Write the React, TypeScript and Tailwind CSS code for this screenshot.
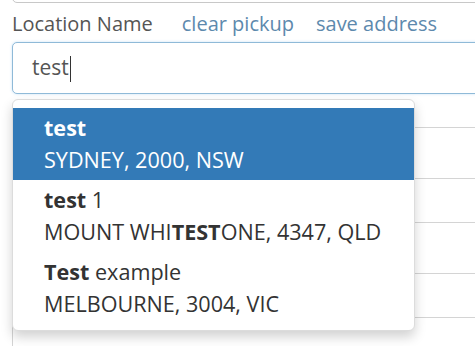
import React from "react";

export default function App() {
  const font = { fontFamily: '"Open Sans", "Noto Sans", sans-serif' };
  return (
    <div className="relative w-[475px] h-[346px] overflow-hidden bg-white" style={font}>
      <div className="pl-[12px] w-[560px] flex flex-col">
        {/* previous input (only its bottom edge visible) */}
        <div className="h-[52px] -mt-[49px] border border-[#c8c8c8] rounded-[5px] bg-white" />
        {/* label row */}
        <div className="h-[39px] flex items-center text-[20px] leading-none pt-[2px]">
          <span className="text-[#555555]">Location Name</span>
          <span className="text-[#5d89ad] ml-[29px]">clear pickup</span>
          <span className="text-[#5d89ad] ml-[22px]">save address</span>
        </div>
        {/* focused input */}
        <div className="h-[52px] border border-[#8fbad8] rounded-[5px] bg-white flex items-center pl-[19px] text-[21px] text-[#555555] shadow-[0_0_3px_rgba(102,175,233,0.35)]">
          <span>test</span>
          <span className="inline-block w-[1px] h-[26px] bg-[#333333] ml-[1px] mt-[2px]" />
        </div>
        {/* inputs behind dropdown */}
        <div className="h-[52px] mt-[33px] border border-[#d4d4d4] rounded-[5px]" />
        <div className="h-[52px] mt-[43px] border border-[#d4d4d4] rounded-[5px]" />
        <div className="h-[52px] mt-[43px] border border-[#d4d4d4] rounded-[5px]" />
      </div>

      {/* dropdown */}
      <div className="absolute left-[12px] top-[99px] w-[403px] h-[232px] bg-white border border-[#dcdcdc] rounded-[6px] shadow-[0_6px_12px_rgba(0,0,0,0.18)] pt-[8px] text-[21.6px] text-[#333333] leading-[32px]">
        <div className="bg-[#337ab7] text-white pl-[31px] py-[4px]">
          <div className="font-bold">test</div>
          <div>SYDNEY, 2000, NSW</div>
        </div>
        <div className="pl-[31px] py-[4px]">
          <div>
            <span className="font-bold">test</span> 1
          </div>
          <div>
            MOUNT WHI<span className="font-bold">TEST</span>ONE, 4347, QLD
          </div>
        </div>
        <div className="pl-[31px] py-[4px]">
          <div>
            <span className="font-bold">Test</span> example
          </div>
          <div>MELBOURNE, 3004, VIC</div>
        </div>
      </div>
    </div>
  );
}
